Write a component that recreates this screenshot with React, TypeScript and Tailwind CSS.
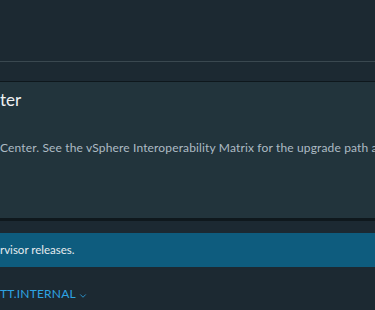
import { ChevronDown } from "lucide-react";

const App = () => {
  return (
    <div
      className="w-[375px] h-[310px] overflow-hidden bg-[#1c2932] text-[#e8ecee] whitespace-nowrap"
      style={{ fontFamily: 'Lato, "Noto Sans", Arial, sans-serif' }}
    >
      {/* top header area */}
      <div className="h-[61px]" />
      <div className="h-px bg-[#3a4850]" />
      <div className="h-[19px]" />
      <div className="h-px bg-[#0e171c]" />

      {/* vCenter card */}
      <div className="h-[136px] bg-[#22343c] pt-[6px] overflow-hidden">
        <h2 className="text-[17px] leading-[24px] text-[#eef1f3] font-normal">ter</h2>
        <p className="mt-[27px] text-[12px] leading-[18px] text-[#adbbc4] tracking-[0.15px]">
          Center. See the vSphere Interoperability Matrix for the upgrade path ar
        </p>
      </div>
      <div className="h-[3px] bg-[#0f181d]" />

      <div className="h-[12px]" />

      {/* info banner */}
      <div className="h-[34px] bg-[#0e5c7e] flex items-center">
        <span className="text-[11.5px] text-[#e6ebee]">rvisor releases.</span>
      </div>

      {/* host link */}
      <div className="pt-[18px] flex items-center">
        <span className="text-[12px] tracking-[0.2px] text-[#2ea3e3]">TT.INTERNAL</span>
        <ChevronDown className="ml-[2px] mt-[3px] w-[10px] h-[10px] text-[#2ea3e3]" strokeWidth={2} />
      </div>
    </div>
  );
};

export default App;
